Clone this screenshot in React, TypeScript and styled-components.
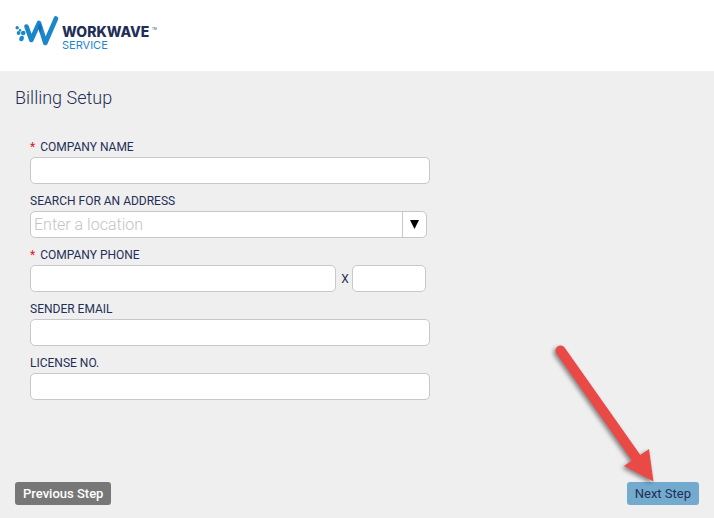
import React from "react";
import styled, { createGlobalStyle } from "styled-components";

const GlobalStyle = createGlobalStyle`
  *, *::before, *::after { box-sizing: border-box; }
  body {
    margin: 0;
    background: #efefef;
    color: #1f2f57;
    font-family: Roboto, "Open Sans", sans-serif;
    font-size: 12px;
  }
  input, button { font: inherit; color: inherit; }
`;

const Page = styled.div`
  display: flex;
  flex-direction: column;
  min-height: 100vh;
`;

const Header = styled.header`
  padding: 12px 14px 17px;
  background: #fff;
`;

const Logo = styled.svg`
  display: block;
  width: 144px;
  height: 42px;
  font-family: Inter, sans-serif;
`;

const Main = styled.main`
  flex: 1;
  display: flex;
  flex-direction: column;
  padding: 15px 15px 13px;
`;

const Title = styled.h1`
  margin: 0;
  font-size: 18px;
  font-weight: 300;
  line-height: 24px;
`;

const Form = styled.form`
  flex: 1;
  display: flex;
  flex-direction: column;
`;

const Fields = styled.div`
  display: flex;
  flex-direction: column;
  gap: 7px;
  width: 100%;
  max-width: 415px;
  padding: 27px 0 24px 15px;
`;

const Field = styled.div`
  display: flex;
  flex-direction: column;
`;

const Label = styled.label`
  line-height: 20px;
`;

const Required = styled.span`
  margin-right: 5px;
  color: #e8112d;
`;

const TextInput = styled.input`
  width: 100%;
  min-width: 0;
  height: 27px;
  padding: 0 3px;
  border: 1px solid #c8c8c8;
  border-radius: 5px;
  background: #fff;
`;

const ComboBox = styled.div`
  display: flex;
  height: 27px;
  margin-right: 3px;
  border: 1px solid #c8c8c8;
  border-radius: 5px;
  background: #fff;
`;

const ComboInput = styled.input`
  flex: 1;
  min-width: 0;
  padding: 0 3px;
  border: 0;
  background: none;
  font-size: 16px;
  font-weight: 300;
  &::placeholder { color: #c3c3c3; opacity: 1; }
`;

const ComboToggle = styled.button`
  display: flex;
  align-items: center;
  justify-content: center;
  width: 24px;
  padding: 0;
  border: 0;
  border-left: 1px solid #c8c8c8;
  background: none;
  color: #000;
`;

const PhoneRow = styled.div`
  display: grid;
  grid-template-columns: 1fr 16px 74px;
  align-items: center;
  margin-right: 4px;
`;

const ExtensionLabel = styled.label`
  padding-left: 2px;
  text-align: center;
`;

const Footer = styled.footer`
  position: relative;
  display: flex;
  justify-content: space-between;
  margin-top: auto;
`;

const StepButton = styled.button<{ $primary?: boolean }>`
  height: 23px;
  padding: 0 8px;
  border: 0;
  border-radius: 3px;
  background: ${(p) => (p.$primary ? "#73abcf" : "#777")};
  color: ${(p) => (p.$primary ? "#1f2f57" : "#fff")};
  font-size: 13px;
  font-weight: ${(p) => (p.$primary ? 400 : 500)};
`;

const Pointer = styled.svg`
  position: absolute;
  right: 36px;
  bottom: 20px;
  width: 120px;
  height: 145px;
  pointer-events: none;
  filter: drop-shadow(-2px 2px 2px rgba(0, 0, 0, 0.45));
`;

function TextField({ id, label, required }: { id: string; label: string; required?: boolean }) {
  return (
    <Field>
      <Label htmlFor={id}>
        {required && <Required>*</Required>}
        {label}
      </Label>
      <TextInput id={id} type="text" required={required} />
    </Field>
  );
}

export default function App() {
  return (
    <>
      <GlobalStyle />
      <Page>
        <Header>
          <Logo viewBox="14 12 144 42" role="img" aria-label="WorkWave Service">
            <path
              d="M26.5 26.5L31.3 40L39 23L45.3 43L56 18.5"
              fill="none"
              stroke="#1b87cb"
              strokeWidth="4.6"
              strokeLinecap="round"
              strokeLinejoin="round"
            />
            <path d="M38 27L40 23L42 28L40 33Z" fill="#146cb2" />
            <g fill="#1b87cb">
              <circle cx="17.2" cy="27.7" r="1.7" />
              <circle cx="20" cy="30.2" r="1.2" />
              <circle cx="18.6" cy="33" r="1.9" />
              <circle cx="23.2" cy="33" r="2.3" />
              <ellipse cx="21.6" cy="38.5" rx="2.2" ry="2.8" transform="rotate(20 21.6 38.5)" />
            </g>
            <text x="62" y="37" fontSize="14" fontWeight="800" fill="#1f2f57">WORKWAVE</text>
            <text x="152" y="30" fontSize="3" fill="#1f2f57">TM</text>
            <text x="62" y="49" fontSize="11" fill="#1b87cb">SERVICE</text>
          </Logo>
        </Header>
        <Main>
          <Title>Billing Setup</Title>
          <Form onSubmit={(e) => e.preventDefault()}>
            <Fields>
              <TextField id="name" label="COMPANY NAME" required />
              <Field>
                <Label htmlFor="address">SEARCH FOR AN ADDRESS</Label>
                <ComboBox>
                  <ComboInput id="address" type="text" placeholder="Enter a location" />
                  <ComboToggle type="button" aria-label="Show locations">
                    <svg width="9" height="9" viewBox="0 0 9 9" aria-hidden="true">
                      <path d="M0 0H9L4.5 9Z" fill="currentColor" />
                    </svg>
                  </ComboToggle>
                </ComboBox>
              </Field>
              <Field>
                <Label htmlFor="phone">
                  <Required>*</Required>
                  COMPANY PHONE
                </Label>
                <PhoneRow>
                  <TextInput id="phone" type="tel" required />
                  <ExtensionLabel htmlFor="extension">X</ExtensionLabel>
                  <TextInput id="extension" type="text" />
                </PhoneRow>
              </Field>
              <TextField id="email" label="SENDER EMAIL" />
              <TextField id="license" label="LICENSE NO." />
            </Fields>
            <Footer>
              <StepButton type="button">Previous Step</StepButton>
              <StepButton type="submit" $primary>Next Step</StepButton>
              <Pointer viewBox="543 340 120 145" aria-hidden="true">
                <path d="M560.5 350.5L637 459" stroke="#ea4a45" strokeWidth="10" strokeLinecap="round" />
                <path d="M624 466L649 449L653.5 481.5Z" fill="#ea4a45" />
              </Pointer>
            </Footer>
          </Form>
        </Main>
      </Page>
    </>
  );
}
